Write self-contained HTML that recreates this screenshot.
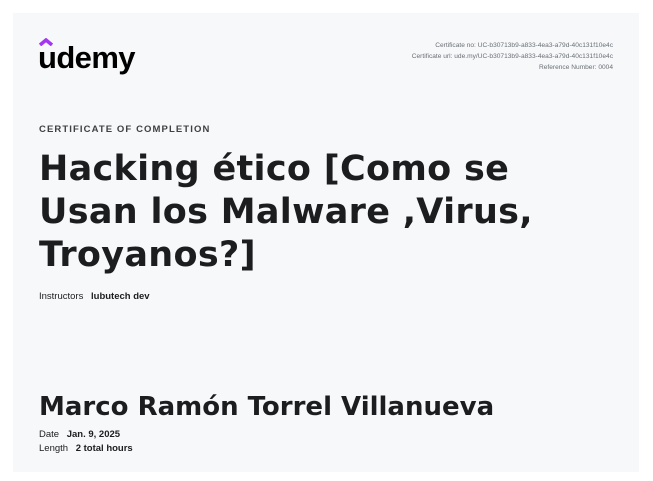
<!DOCTYPE html>
<html><head><meta charset="utf-8"><style>
body{margin:0;width:653px;height:481px;background:#fff;position:relative;overflow:hidden;font-family:"Liberation Sans",sans-serif;color:#1c1d1f}
.p{position:absolute;left:13px;top:13px;width:626px;height:459px;background:#f7f8fa}
.a{position:absolute}
.logo{left:38px;top:40px;font-size:31px;font-weight:bold;letter-spacing:-0.6px;color:#000;font-family:"Liberation Sans",sans-serif}
.meta{right:40px;top:40px;text-align:right;font-size:6.6px;line-height:11px;color:#6a6f73}
.cc{left:39px;top:124px;font-size:9.5px;font-weight:bold;letter-spacing:1.1px;color:#3e4143}
h1{position:absolute;left:39px;top:148px;margin:0;font-family:"DejaVu Sans",sans-serif;font-weight:bold;font-size:35px;line-height:43px;letter-spacing:0.3px;color:#1c1d1f}
.ins{left:39px;top:291px;font-size:9.5px}
.nm{left:39px;top:392px;font-family:"DejaVu Sans",sans-serif;font-weight:bold;font-size:26px}
.d{left:39px;top:428px;font-size:9.5px;line-height:14px}
b{font-weight:bold;margin-left:5px}
</style></head><body>
<div class="p"></div>
<svg class="a" style="left:39px;top:38px" width="14" height="8"><path d="M1 7 L7 2 L13 7" stroke="#a435f0" stroke-width="3.5" fill="none"/></svg>
<div class="a logo">udemy</div>
<div class="a meta">Certificate no: UC-b30713b9-a833-4ea3-a79d-40c131f10e4c<br>Certificate url: ude.my/UC-b30713b9-a833-4ea3-a79d-40c131f10e4c<br>Reference Number: 0004</div>
<div class="a cc">CERTIFICATE OF COMPLETION</div>
<h1>Hacking ético [Como se<br>Usan los Malware ,Virus,<br>Troyanos?]</h1>
<div class="a ins">Instructors <b>lubutech dev</b></div>
<div class="a nm">Marco Ramón Torrel Villanueva</div>
<div class="a d">Date <b>Jan. 9, 2025</b><br>Length <b>2 total hours</b></div>
</body></html>
